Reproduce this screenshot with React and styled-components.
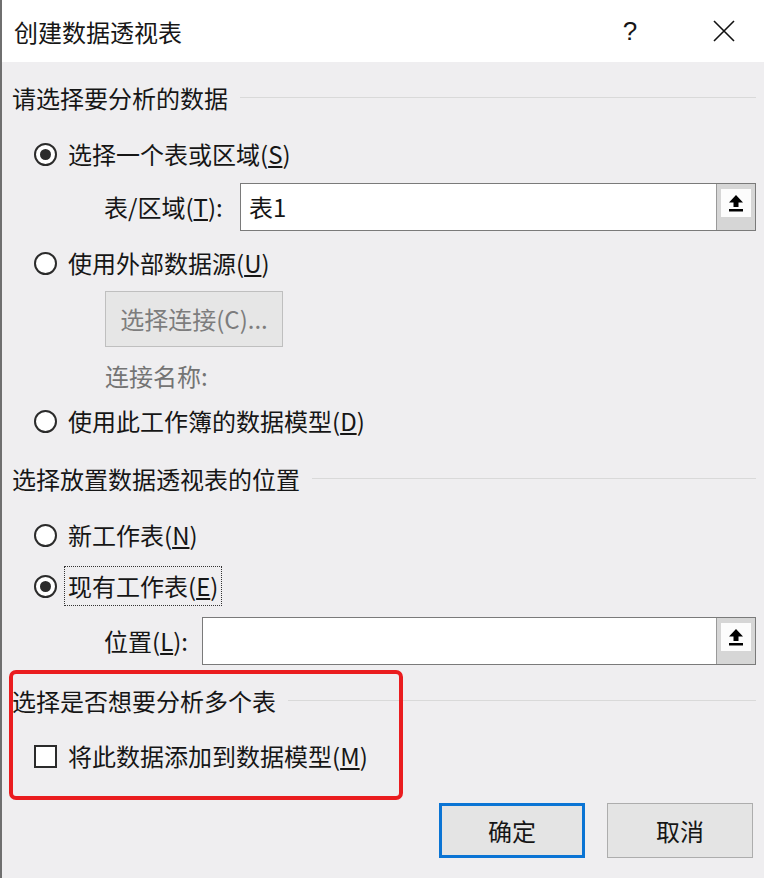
import styled, { createGlobalStyle } from "styled-components";

const GlobalStyle = createGlobalStyle`
  html, body {
    margin: 0;
    padding: 0;
    background: #efeef0;
  }
  body {
    font-family: "Noto Sans CJK SC", "Noto Sans", sans-serif;
    color: #161616;
  }
`;

const Dialog = styled.div`
  width: 764px;
  height: 878px;
  background: #efeef0;
  border-left: 2px solid #6f6f6f;
  box-sizing: border-box;
  overflow: hidden;
`;

const TitleBar = styled.div`
  height: 62px;
  background: #ffffff;
  display: flex;
  align-items: center;
  padding-left: 12px;
  padding-right: 28px;
`;

const Title = styled.div`
  flex: 1;
  font-size: 24px;
  line-height: 28px;
  margin-top: 2px;
`;

const TitleIcon = styled.div`
  font-family: "Liberation Sans", sans-serif;
  font-size: 26px;
  line-height: 28px;
  width: ${(p) => p.$w}px;
  text-align: center;
  margin-left: ${(p) => p.$gap}px;
  display: flex;
  align-items: center;
  justify-content: center;
`;

const Body = styled.div`
  display: flex;
  flex-direction: column;
  padding-left: 10px;
  padding-right: 8px;
`;

const SectionHeader = styled.div`
  display: flex;
  align-items: center;
  height: 42px;
  flex-shrink: 0;
  margin-top: ${(p) => p.$top || 0}px;
  font-size: 24px;
  line-height: 28px;

  &::after {
    content: "";
    flex: 1;
    height: 1px;
    background: #d9d9d9;
    margin-left: 12px;
    margin-top: -2px;
  }
`;

const OptionRow = styled.label`
  display: flex;
  align-items: center;
  flex-shrink: 0;
  height: ${(p) => p.$h || 42}px;
  margin-top: ${(p) => p.$top || 0}px;
  padding-left: ${(p) => p.$indent || 22}px;
  font-size: 24px;
  line-height: 28px;
`;

const Radio = styled.span`
  width: 23px;
  height: 23px;
  box-sizing: border-box;
  border: 2px solid #2b2b2b;
  border-radius: 50%;
  background: #fff;
  display: flex;
  align-items: center;
  justify-content: center;
  margin-right: 11px;
  flex-shrink: 0;

  &::after {
    content: "";
    width: 11px;
    height: 11px;
    border-radius: 50%;
    background: ${(p) => (p.$checked ? "#2b2b2b" : "transparent")};
  }
`;

const CheckBox = styled.span`
  width: 23px;
  height: 23px;
  box-sizing: border-box;
  border: 2px solid #2b2b2b;
  background: #fff;
  margin-right: 11px;
  flex-shrink: 0;
`;

const OptionText = styled.span`
  padding: 5px 3px;
  margin-left: -4px;
  border: 1px dotted ${(p) => (p.$focus ? "#333" : "transparent")};
`;

const FieldRow = styled.div`
  display: flex;
  align-items: center;
  flex-shrink: 0;
  height: ${(p) => p.$h}px;
  margin-top: ${(p) => p.$top || 0}px;
  padding-left: 92px;
`;

const FieldLabel = styled.span`
  font-size: 24px;
  line-height: 28px;
  width: ${(p) => p.$w}px;
  flex-shrink: 0;
`;

const RangeInput = styled.div`
  flex: 1;
  height: 100%;
  display: flex;
  box-sizing: border-box;
  border: 1px solid #7a7a7a;
  background: #fff;
`;

const InputText = styled.div`
  flex: 1;
  display: flex;
  align-items: center;
  padding-left: 8px;
  font-size: 24px;
  line-height: 28px;
`;

const PickerButton = styled.div`
  width: 39px;
  border-left: 1px solid #9a9a9a;
  background: #d6d6d6;
  display: flex;
  justify-content: center;
  padding-top: 5px;
  box-sizing: border-box;
`;

const PickerFace = styled.div`
  width: 30px;
  height: 28px;
  background: #fcfcfc;
  display: flex;
  align-items: center;
  justify-content: center;
`;

const GhostButton = styled.div`
  width: 178px;
  height: 56px;
  flex-shrink: 0;
  margin-top: 7px;
  margin-left: 93px;
  box-sizing: border-box;
  border: 1px solid #bfbfbf;
  background: #e6e6e6;
  color: #7d7d7d;
  font-size: 24px;
  line-height: 28px;
  display: flex;
  align-items: center;
  justify-content: center;
`;

const Hint = styled.div`
  height: 30px;
  flex-shrink: 0;
  margin-top: 14px;
  padding-left: 93px;
  color: #747474;
  font-size: 24px;
  line-height: 30px;
`;

const Highlighted = styled.div`
  position: relative;
  margin-top: 5px;
  height: 129px;
  flex-shrink: 0;
  display: flex;
  flex-direction: column;
  padding-top: 10px;
  box-sizing: border-box;
`;

const RedFrame = styled.div`
  position: absolute;
  left: -3px;
  top: 0;
  width: 394px;
  height: 130px;
  box-sizing: border-box;
  border: 4px solid #ea1c1f;
  border-radius: 7px;
  pointer-events: none;
`;

const Footer = styled.div`
  display: flex;
  justify-content: flex-end;
  gap: 22px;
  margin-top: 4px;
  padding-right: 3px;
`;

const DialogButton = styled.div`
  width: 146px;
  height: 55px;
  box-sizing: border-box;
  border: ${(p) => (p.$primary ? "3px solid #0a74d4" : "1px solid #adadad")};
  background: #e4e4e4;
  font-size: 24px;
  line-height: 28px;
  display: flex;
  align-items: center;
  justify-content: center;
`;

function UploadIcon() {
  return (
    <svg width="20" height="20" viewBox="0 0 20 20">
      <path d="M10 2 L3 9.5 H7.5 V14 H12.5 V9.5 H17 Z" fill="#000" />
      <rect x="3" y="16" width="14" height="2.5" fill="#000" />
    </svg>
  );
}

function CloseIcon() {
  return (
    <svg width="22" height="22" viewBox="0 0 22 22">
      <path d="M1 1 L21 21 M21 1 L1 21" stroke="#111" strokeWidth="1.6" />
    </svg>
  );
}

function RangeField({ label, labelWidth, value, top }) {
  return (
    <FieldRow $h={48} $top={top}>
      <FieldLabel $w={labelWidth}>{label}</FieldLabel>
      <RangeInput>
        <InputText>{value}</InputText>
        <PickerButton>
          <PickerFace>
            <UploadIcon />
          </PickerFace>
        </PickerButton>
      </RangeInput>
    </FieldRow>
  );
}

export default function App() {
  return (
    <>
      <GlobalStyle />
      <Dialog>
        <TitleBar>
          <Title>创建数据透视表</Title>
          <TitleIcon $w={24} $gap={0}>?</TitleIcon>
          <TitleIcon $w={24} $gap={70}>
            <CloseIcon />
          </TitleIcon>
        </TitleBar>

        <Body>
          <SectionHeader $top={15}>请选择要分析的数据</SectionHeader>
          <OptionRow $top={14}>
            <Radio $checked />
            <OptionText>
              选择一个表或区域(<u>S</u>)
            </OptionText>
          </OptionRow>
          <RangeField
            label={
              <>
                表/区域(<u>T</u>):
              </>
            }
            labelWidth={136}
            value="表1"
            top={8}
          />
          <OptionRow $top={11}>
            <Radio />
            <OptionText>
              使用外部数据源(<u>U</u>)
            </OptionText>
          </OptionRow>
          <GhostButton>选择连接(C)...</GhostButton>
          <Hint>连接名称:</Hint>
          <OptionRow $top={9}>
            <Radio />
            <OptionText>
              使用此工作簿的数据模型(<u>D</u>)
            </OptionText>
          </OptionRow>

          <SectionHeader $top={16}>选择放置数据透视表的位置</SectionHeader>
          <OptionRow $top={14}>
            <Radio />
            <OptionText>
              新工作表(<u>N</u>)
            </OptionText>
          </OptionRow>
          <OptionRow $top={9} $h={42}>
            <Radio $checked />
            <OptionText $focus>
              现有工作表(<u>E</u>)
            </OptionText>
          </OptionRow>
          <RangeField
            label={
              <>
                位置(<u>L</u>):
              </>
            }
            labelWidth={98}
            value=""
            top={10}
          />

          <Highlighted>
            <SectionHeader>选择是否想要分析多个表</SectionHeader>
            <OptionRow $top={13}>
              <CheckBox />
              <OptionText>
                将此数据添加到数据模型(<u>M</u>)
              </OptionText>
            </OptionRow>
            <RedFrame />
          </Highlighted>

          <Footer>
            <DialogButton $primary>确定</DialogButton>
            <DialogButton>取消</DialogButton>
          </Footer>
        </Body>
      </Dialog>
    </>
  );
}
